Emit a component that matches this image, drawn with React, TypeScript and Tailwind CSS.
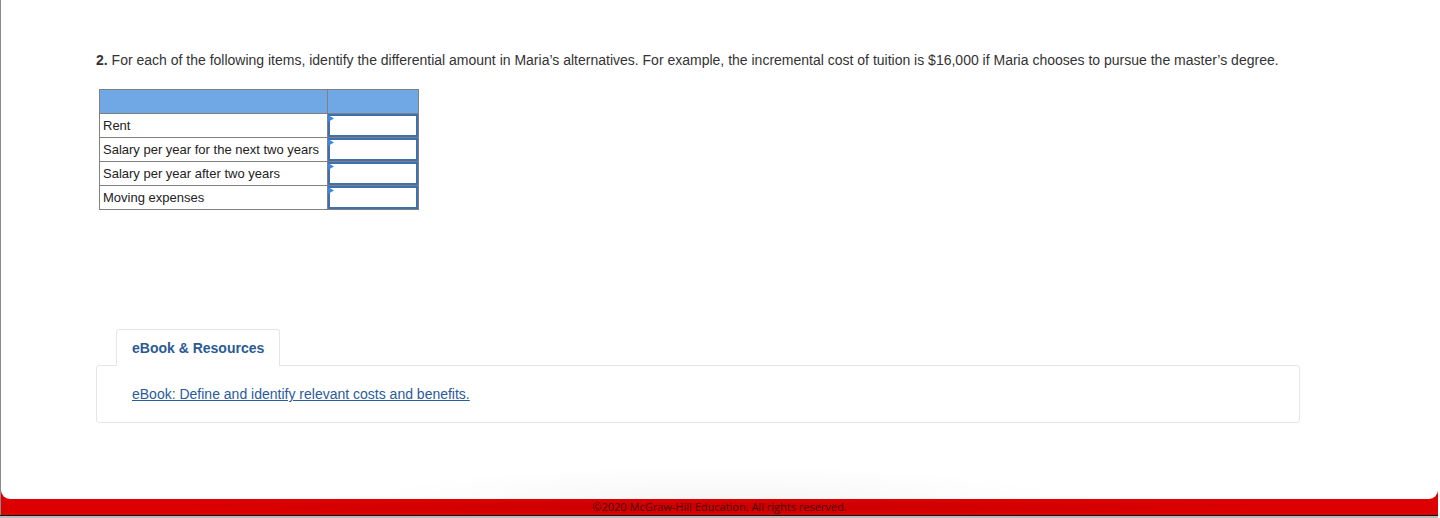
import React from "react";

const rows = [
  "Rent",
  "Salary per year for the next two years",
  "Salary per year after two years",
  "Moving expenses",
];

export default function App() {
  return (
    <div className="w-[1440px] h-[518px] bg-white overflow-hidden relative" style={{ fontFamily: '"Liberation Sans", Arial, sans-serif' }}>
      <div className="w-[1438px] h-[515px] bg-[#dd0000] border-l border-[#8a8a8a] flex flex-col">
        <div className="h-[499px] bg-white rounded-b-[9px] relative">
          <div className="pt-[50px] pl-[95px] text-[14px] leading-[20px] text-[#333]">
            <b>2.</b> For each of the following items, identify the differential amount in Maria’s alternatives. For example, the incremental cost of tuition is $16,000 if Maria chooses to pursue the master’s degree.
          </div>
          <table className="ml-[98px] mt-[19px] border-collapse text-[13px] text-[#222]">
            <tbody>
              <tr className="h-[24px] bg-[#70a8e6]">
                <td className="w-[228px] border border-[#808080] p-0"></td>
                <td className="w-[91px] border border-[#808080] p-0"></td>
              </tr>
              {rows.map((r) => (
                <tr key={r} className="h-[24px]">
                  <td className="border border-[#808080] px-[3px] py-0 leading-[23px] whitespace-nowrap">{r}</td>
                  <td className="border border-[#808080] p-0 relative">
                    <div className="h-[23px] border-2 border-[#3f6fae] relative">
                      <svg className="absolute -left-[2px] -top-[1px]" width="6" height="7" viewBox="0 0 6 7">
                        <polygon points="0,0 6,3.5 0,7" fill="#3a8ae2" />
                      </svg>
                    </div>
                  </td>
                </tr>
              ))}
            </tbody>
          </table>
          <div className="mt-[119px] ml-[95px] w-[1204px]">
            <div className="ml-[20px] w-[164px] h-[37px] border border-b-0 border-[#e6e6e6] rounded-t-[3px] bg-white relative z-10 -mb-[1px] flex items-center pl-[15px] pt-[1px] text-[14px] font-bold text-[#2b5a94]">
              eBook &amp; Resources
            </div>
            <div className="h-[58px] border border-[#e6e6e6] rounded-[3px] flex items-center pl-[35px] pt-[1px]">
              <a className="text-[14px] text-[#2a5b9c] underline">eBook: Define and identify relevant costs and benefits.</a>
            </div>
          </div>
          <div className="absolute left-[360px] right-[360px] bottom-0 h-[34px]" style={{ background: "radial-gradient(ellipse at 50% 100%, rgba(0,0,0,0.035), rgba(0,0,0,0) 70%)" }}></div>
        </div>
        <div className="h-[16px] flex items-center justify-center text-[11px] text-[#4a0a0a] bg-[radial-gradient(ellipse_at_center,#c80000,#dd0000_60%)]" style={{ fontFamily: '"Open Sans", "DejaVu Sans", sans-serif' }}>
          ©2020 McGraw-Hill Education. All rights reserved.
        </div>
      </div>
      <div className="h-[1px] w-[1438px] bg-[#111]"></div>
      <div className="h-[2px] w-[1438px] bg-[#bbb]"></div>
    </div>
  );
}
